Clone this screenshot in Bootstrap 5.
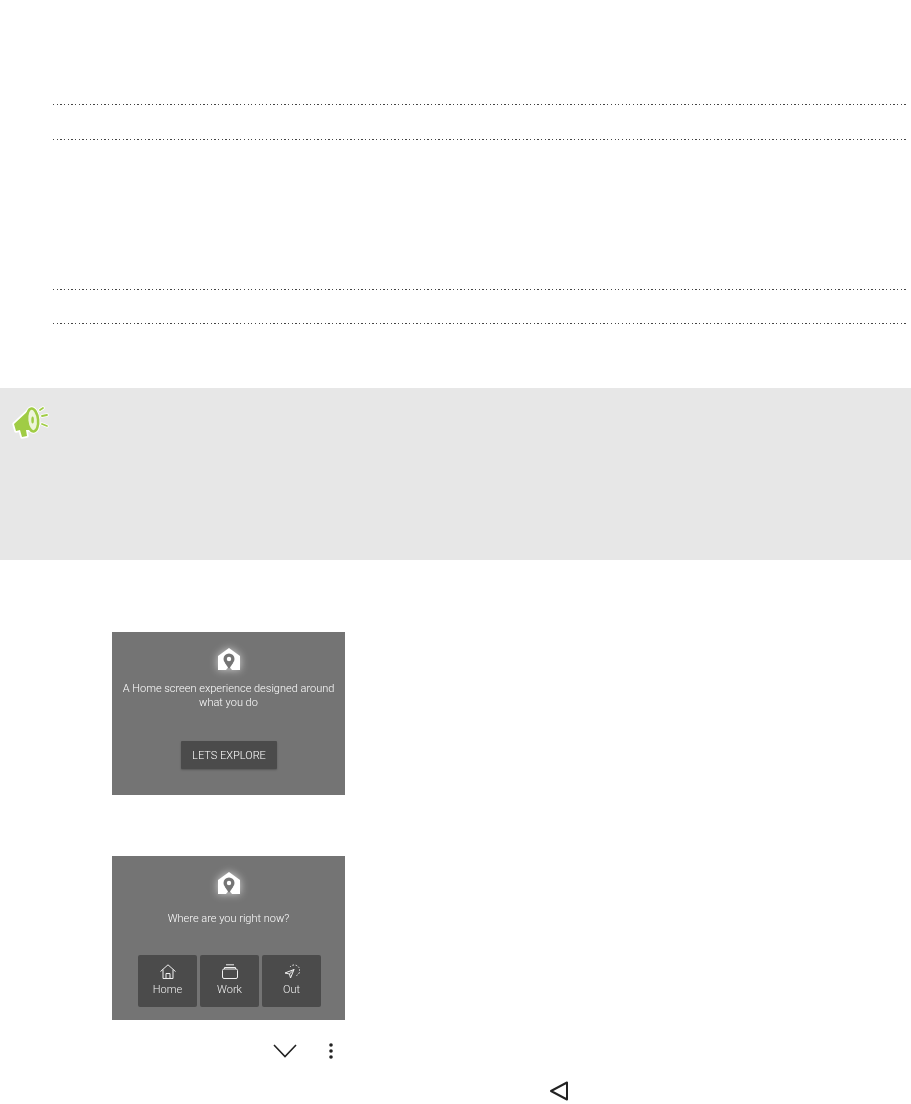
<!DOCTYPE html>
<html lang="en">
<head>
  <meta charset="UTF-8">
  <title>Home screen setup</title>
  <link href="https://cdn.jsdelivr.net/npm/bootstrap@5.3.3/dist/css/bootstrap.min.css" rel="stylesheet">
  <style>
    body { background: #fff; font-family: Roboto, "Liberation Sans", sans-serif; overflow: hidden; height: 1104px; }

    /* dotted rules */
    .rule-group { padding: 0 4px 0 53px; }
    .rule-line { height: 35px; background: repeating-linear-gradient(90deg, #444 0 1.3px, transparent 1.3px 3.67px) top left / 100% 1px no-repeat; }
    .rule-line.short { height: 34px; }
    .rule-top { padding-top: 104px; }
    .rule-mid { padding-top: 115px; }

    .note-band { background: #e7e7e7; height: 172px; margin-top: 31px; padding: 16px 0 0 12px; }

    /* grey phone shots */
    .shot { width: 233px; margin-left: 112px; background: #747474; color: #fff; text-align: center; font-weight: 300; }
    .shot-one { height: 163px; margin-top: 72px; padding-top: 16px; }
    .shot-two { height: 164px; margin-top: 61px; padding-top: 16px; }
    .shot-logo { display: block; margin: 0 auto; filter: drop-shadow(0 0 4px rgba(255,255,255,.7)); }
    .shot-text { font-size: 11px; line-height: 14px; margin-top: 12px; will-change: transform; }
    .shot-two .shot-text { margin-top: 18px; }
    .explore-btn { background: #4b4b4b; color: #fff; font-size: 11px; width: 96px; height: 28px; margin: 31px auto 0; padding-top: 2px; border-radius: 1px; box-shadow: 0 1px 2px rgba(0,0,0,.25); will-change: transform; }
    .place-row { gap: 3px; margin-top: 29px; padding-left: 26px; }
    .place-tile { background: #4b4b4b; width: 59px; height: 52px; border-radius: 2px; font-size: 11px; line-height: 13px; padding-top: 9px; color: #f0f0f0; will-change: transform; }
    .place-tile svg { display: block; margin: 0 auto 4px; }

    .icon-row-one { height: 20px; margin-top: 21px; padding-left: 273px; gap: 31px; }
    .icon-row-two { margin-top: 20px; padding-left: 549px; }
  </style>
</head>
<body>
  <!-- top rules -->
  <div class="rule-group rule-top">
    <div class="rule-line"></div>
    <div class="rule-line"></div>
  </div>
  <div class="rule-group rule-mid">
    <div class="rule-line short"></div>
    <div class="rule-line short"></div>
  </div>

  <!-- note band with the megaphone -->
  <div class="note-band">
    <svg class="d-block" width="40" height="38" viewBox="0 0 40 38">
      <g stroke="#fff" stroke-width="3.5" stroke-linejoin="round" stroke-linecap="round" fill="#fff">
        <path d="M2 20 L16 7 L18 26 L14 26 L15 32 L10 33 L8 26 L4 27 Z"/>
        <ellipse cx="20.6" cy="16" rx="6" ry="12" transform="rotate(-6 20.6 16)"/>
        <path d="M28 6 L31 4 M30 12 L35 11 M30 20 L35 22"/>
      </g>
      <path d="M2 20 L16 7 L18 26 L14 26 L15 32 L10 33 L8 26 L4 27 Z" fill="#a0cc45"/>
      <ellipse cx="20.6" cy="16" rx="5.5" ry="11.5" transform="rotate(-6 20.6 16)" fill="#eef5da" stroke="#a0cc45" stroke-width="2.6"/>
      <ellipse cx="20.6" cy="16" rx="1.3" ry="3.6" fill="#a0cc45"/>
      <path d="M28 6 L31 4 M30 12 L35 11 M30 20 L35 22" stroke="#a0cc45" stroke-width="1.8" stroke-linecap="round"/>
    </svg>
  </div>

  <!-- first shot -->
  <div class="shot shot-one">
    <svg class="shot-logo" width="22" height="22" viewBox="0 0 22 22">
      <path d="M11 0 L22 8 V22 H14 L11 18 L8 22 H0 V8 Z" fill="#fff"/>
      <circle cx="11" cy="11" r="5.5" fill="#747474"/>
      <path d="M7 15 L11 21 L15 15 Z" fill="#747474"/>
      <circle cx="11" cy="11" r="2.2" fill="#fff"/>
    </svg>
    <div class="shot-text">A Home screen experience designed around<br>what you do</div>
    <div class="explore-btn d-flex align-items-center justify-content-center">LETS EXPLORE</div>
  </div>

  <!-- second shot -->
  <div class="shot shot-two">
    <svg class="shot-logo" width="22" height="22" viewBox="0 0 22 22">
      <path d="M11 0 L22 8 V22 H14 L11 18 L8 22 H0 V8 Z" fill="#fff"/>
      <circle cx="11" cy="11" r="5.5" fill="#747474"/>
      <path d="M7 15 L11 21 L15 15 Z" fill="#747474"/>
      <circle cx="11" cy="11" r="2.2" fill="#fff"/>
    </svg>
    <div class="shot-text">Where are you right now?</div>
    <div class="place-row d-flex">
      <div class="place-tile">
        <svg width="16" height="15" viewBox="0 0 16 15" fill="none" stroke="#f0f0f0" stroke-width="1"><path d="M.5 7.5 L8 .8 L15.5 7.5 M3 5.5 V14.5 H13 V5.5 M6 14.5 V9.5 H10 V14.5"/></svg>
        Home
      </div>
      <div class="place-tile">
        <svg width="16" height="15" viewBox="0 0 16 15" fill="none" stroke="#f0f0f0" stroke-width="1"><rect x=".5" y="5" width="15" height="9.5" rx="1.5"/><path d="M2.5 5 V3.5 H13.5 V5 M4 .8 H12"/></svg>
        Work
      </div>
      <div class="place-tile">
        <svg width="16" height="15" viewBox="0 0 16 15" fill="none" stroke="#f0f0f0" stroke-width="1"><path d="M1 9 L10 5.5 L6.5 14 L5.5 10 Z M5.5 10 L10 5.5"/><path d="M6 3 A5.5 5.5 0 1 1 12.5 11.5" stroke-dasharray="1.5 1.5"/></svg>
        Out
      </div>
    </div>
  </div>

  <!-- inline glyphs left from the text -->
  <div class="icon-row-one d-flex align-items-center">
    <svg width="24" height="14" viewBox="0 0 24 14" fill="none" stroke="#222" stroke-width="1.6"><path d="M1 1 L12 12.5 L23 1"/></svg>
    <svg width="6" height="16" viewBox="0 0 6 16" fill="#222"><circle cx="3" cy="2" r="1.8"/><circle cx="3" cy="8" r="1.8"/><circle cx="3" cy="14" r="1.8"/></svg>
  </div>
  <div class="icon-row-two">
    <svg class="d-block" width="20" height="20" viewBox="0 0 20 20" fill="none" stroke="#222" stroke-width="2" stroke-linejoin="round"><path d="M18 1.5 V18.5 L2 10 Z"/></svg>
  </div>

  <script src="https://cdn.jsdelivr.net/npm/bootstrap@5.3.3/dist/js/bootstrap.bundle.min.js"></script>
</body>
</html>
